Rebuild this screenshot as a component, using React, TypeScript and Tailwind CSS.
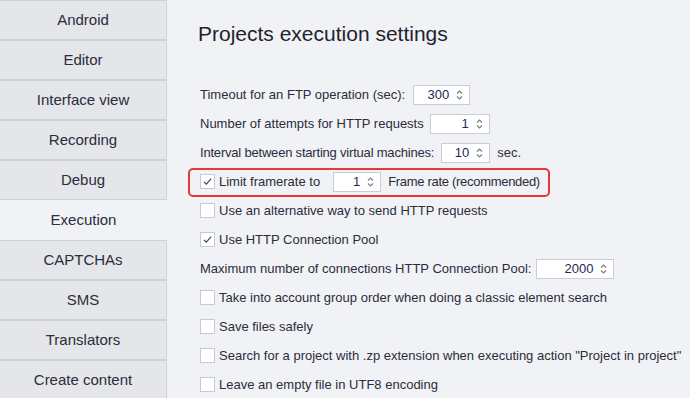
import React from "react";

const FONT = { fontFamily: '"Liberation Sans", Arial, sans-serif' };

const NAV = [
  "Android",
  "Editor",
  "Interface view",
  "Recording",
  "Debug",
  "Execution",
  "CAPTCHAs",
  "SMS",
  "Translators",
  "Create content",
];

function Arrows() {
  return (
    <svg width="7" height="12" viewBox="0 0 7 12" className="shrink-0">
      <path d="M1 4.5 L3.5 2 L6 4.5" fill="none" stroke="#7a7f88" strokeWidth="1.2" />
      <path d="M1 7.5 L3.5 10 L6 7.5" fill="none" stroke="#7a7f88" strokeWidth="1.2" />
    </svg>
  );
}

function Spin({ value, w }: { value: string; w: string }) {
  return (
    <div
      className={`${w} h-[20px] bg-white border border-[#c9cdd5] flex items-center justify-end pr-[6px] gap-[7px] text-[13px] text-[#1e2a55]`}
    >
      <span>{value}</span>
      <Arrows />
    </div>
  );
}

function Check({ checked }: { checked?: boolean }) {
  return (
    <div className="w-[15px] h-[15px] bg-white border border-[#c6cad2] flex items-center justify-center shrink-0">
      {checked && (
        <svg width="11" height="11" viewBox="0 0 11 11">
          <path d="M2 5.8 L4.3 8.2 L9.2 2.6" fill="none" stroke="#3c4049" strokeWidth="1.1" />
        </svg>
      )}
    </div>
  );
}

function Row({ children, className = "" }: { children: React.ReactNode; className?: string }) {
  return <div className={`h-[29px] flex items-center ${className}`}>{children}</div>;
}

function CheckRow({ checked, label }: { checked?: boolean; label: string }) {
  return (
    <Row>
      <Check checked={checked} />
      <span className="ml-[4px]">{label}</span>
    </Row>
  );
}

export default function App() {
  return (
    <div className="w-[690px] h-[398px] flex bg-[#f1f2f6] overflow-hidden text-[#2a2d3a]" style={FONT}>
      <div className="w-[167px] shrink-0 flex flex-col">
        {NAV.map((n) =>
          n === "Execution" ? (
            <div key={n} className="h-[40px] shrink-0 flex items-center justify-center text-[15px] pt-[1px] bg-[#f1f2f6]">
              {n}
            </div>
          ) : (
            <div
              key={n}
              className="h-[40px] shrink-0 flex items-center justify-center text-[15px] pt-[1px] bg-[#e5e6ea] border-y border-r border-[#cdd2da]"
            >
              {n}
            </div>
          )
        )}
      </div>
      <div className="flex-1 pl-[31px] text-[13px]">
        <div className="h-[80px] pt-[20px] text-[21px] leading-[28px] text-[#1f2330]">Projects execution settings</div>
        <div className="pl-[2px]">
          <Row className="gap-[8px]">
            <span>Timeout for an FTP operation (sec):</span>
            <Spin value="300" w="w-[57px]" />
          </Row>
          <Row className="gap-[6px]">
            <span>Number of attempts for HTTP requests</span>
            <Spin value="1" w="w-[60px]" />
          </Row>
          <Row className="gap-[7px]">
            <span className="tracking-[-0.2px]">Interval between starting virtual machines:</span>
            <Spin value="10" w="w-[49px]" />
            <span>sec.</span>
          </Row>
          <div className="relative">
            <Row>
              <Check checked />
              <span className="ml-[4px]">Limit framerate to</span>
              <div className="ml-[13px]">
                <Spin value="1" w="w-[48px]" />
              </div>
              <span className="ml-[7px] tracking-[-0.3px]">Frame rate (recommended)</span>
            </Row>
            <div className="absolute left-[-12px] top-[1px] w-[362px] h-[29px] border-2 border-[#e5383b] rounded-[5px] pointer-events-none" />
          </div>
          <CheckRow label="Use an alternative way to send HTTP requests" />
          <CheckRow checked label="Use HTTP Connection Pool" />
          <Row className="gap-[5px]">
            <span>Maximum number of connections HTTP Connection Pool:</span>
            <Spin value="2000" w="w-[78px]" />
          </Row>
          <CheckRow label="Take into account group order when doing a classic element search" />
          <CheckRow label="Save files safely" />
          <CheckRow label={'Search for a project with .zp extension when executing action "Project in project"'} />
          <CheckRow label="Leave an empty file in UTF8 encoding" />
        </div>
      </div>
    </div>
  );
}
